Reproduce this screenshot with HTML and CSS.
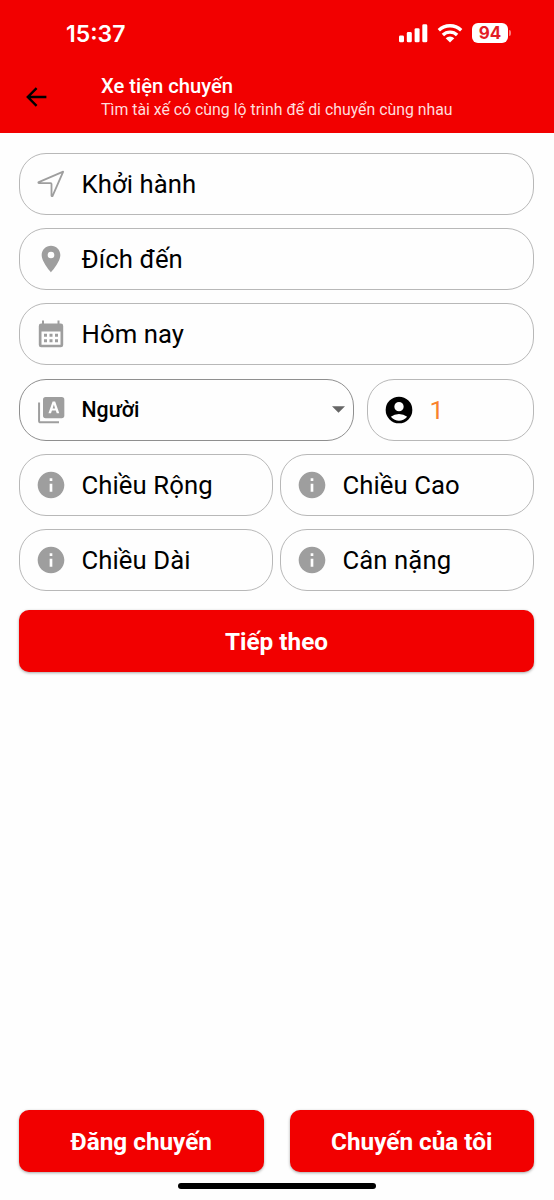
FILE: index.html
```html
<!DOCTYPE html>
<html lang="vi">
<head>
<meta charset="utf-8">
<title>Xe tiện chuyến</title>
<link rel="stylesheet" href="styles.css">
</head>
<body>
<svg class="defs" width="0" height="0" aria-hidden="true">
  <symbol id="info" viewBox="0 0 24 24"><path d="M12 2C6.48 2 2 6.48 2 12s4.48 10 10 10 10-4.48 10-10S17.52 2 12 2zm1 15h-2v-6h2v6zm0-8h-2V7h2v2z"/></symbol>
</svg>
<div class="screen">
  <header class="header">
    <div class="status">
      <span class="time">15:37</span>
      <div class="indicators">
        <svg class="signal" width="29" height="19" viewBox="0 0 29 19"><rect x="0" y="11.5" width="5" height="6.8" rx="1.4"/><rect x="7.8" y="8" width="5" height="10.3" rx="1.4"/><rect x="15.6" y="4.2" width="5" height="14.1" rx="1.4"/><rect x="23.3" y="0.3" width="5" height="18" rx="1.4"/></svg>
        <svg class="wifi" width="26" height="19" viewBox="0 0 26 19"><path class="arc" d="M1.8 6.3A16 16 0 0 1 24.2 6.3M5.900 11A10 10 0 0 1 20.1 11"/><path d="M13 18.500 8.700 14.2A6.200 6.200 0 0 1 17.3 14.2Z"/></svg>
        <div class="battery"><span class="level">94</span><span class="tip"></span></div>
      </div>
    </div>
    <div class="appbar">
      <svg class="back" width="22" height="20" viewBox="0 0 22 20"><path d="M20.4 10H2M10.6 1.2 1.8 10l8.8 8.8"/></svg>
      <div class="titles">
        <h1 class="title">Xe tiện chuyến</h1>
        <p class="subtitle">Tìm tài xế có cùng lộ trình để di chuyển cùng nhau</p>
      </div>
    </div>
  </header>
  <main class="form">
    <div class="field">
      <svg class="icon" viewBox="0 0 32 32"><path class="outline" d="M28.2 3.7 3.8 14.1c-.6.3-.6.9.1 1h11.7c.6 0 .9.3.9.9v11.5c.1.7.8.9 1.2.2Z"/></svg>
      <span class="label">Khởi hành</span>
    </div>
    <div class="field">
      <svg class="icon" viewBox="0 0 24 24"><path d="M12 2C8.13 2 5 5.13 5 9c0 5.25 7 13 7 13s7-7.75 7-13c0-3.87-3.13-7-7-7zm0 9.500a2.500 2.500 0 0 1 0-5 2.500 2.500 0 0 1 0 5z"/></svg>
      <span class="label">Đích đến</span>
    </div>
    <div class="field">
      <svg class="icon" viewBox="0 0 32 32"><path fill-rule="evenodd" d="M7 2.500h2v3h13.500v-3h2v3h1.300a2.400 2.400 0 0 1 2.400 2.400v19a2.400 2.400 0 0 1-2.400 2.400H6.200a2.400 2.400 0 0 1-2.400-2.400v-19a2.400 2.400 0 0 1 2.400-2.400H7ZM6.500 13.500v13.300h19V13.500Z"/><path d="M9 15.700h3v3H9zm5.500 0h3v3h-3zm5.500 0h3v3h-3zM9 21.300h3v3H9zm5.500 0h3v3h-3zm5.500 0h3v3h-3z"/></svg>
      <span class="label">Hôm nay</span>
    </div>
    <div class="row people">
      <div class="field select">
        <svg class="icon" viewBox="0 0 24 24"><path fill-rule="evenodd" d="M8 2.300h12a2 2 0 0 1 2 2v11.800a2 2 0 0 1-2 2H8a2 2 0 0 1-2-2V4.300a2 2 0 0 1 2-2zM10.100 14.400h1.900l.7-2h2.900l.7 2h1.900l-3.100-8.800h-1.900zM13.200 10.900l.95-3.100.95 3.100z"/><path d="M2.300 6.300h1.500v14.200H18V22H4.300a2 2 0 0 1-2-2z"/></svg>
        <span class="label">Người</span>
        <svg class="caret" width="13" height="7" viewBox="0 0 13 7"><path d="M0 .3h13L6.500 6.800z"/></svg>
      </div>
      <div class="field count">
        <svg class="icon" viewBox="0 0 24 24"><path fill-rule="evenodd" d="M12 2a10 10 0 1 0 0 20 10 10 0 0 0 0-20zm0 4a3.500 3.500 0 1 1 0 7 3.500 3.500 0 0 1 0-7zm0 14c-2.030 0-4.430-.82-6.140-2.880a9.950 9.950 0 0 1 12.280 0C16.430 19.180 14.030 20 12 20z"/></svg>
        <span class="label">1</span>
      </div>
    </div>
    <div class="row">
      <div class="field"><svg class="icon"><use href="#info"/></svg><span class="label">Chiều Rộng</span></div>
      <div class="field"><svg class="icon"><use href="#info"/></svg><span class="label">Chiều Cao</span></div>
    </div>
    <div class="row">
      <div class="field"><svg class="icon"><use href="#info"/></svg><span class="label">Chiều Dài</span></div>
      <div class="field"><svg class="icon"><use href="#info"/></svg><span class="label">Cân nặng</span></div>
    </div>
    <button class="button next">Tiếp theo</button>
  </main>
  <footer class="footer">
    <div class="actions">
      <button class="button">Đăng chuyến</button>
      <button class="button">Chuyến của tôi</button>
    </div>
    <div class="home"></div>
  </footer>
</div>
</body>
</html>
```

FILE: styles.css
```css
* { box-sizing: border-box; }
body { margin: 0; background: #fefefe; font-family: Roboto, sans-serif; }
.defs { display: block; }
.screen { width: 554px; height: 1200px; display: flex; flex-direction: column; }
.header { height: 133.400px; background: #f20000; color: #fff; }
.status { height: 66px; padding: 0 43px 0 66px; display: flex; justify-content: space-between; align-items: center; }
.time { font: 600 23px Inter, sans-serif; padding-top: 1px; }
.indicators { display: flex; align-items: center; fill: #fff; }
.signal { margin-right: -1px; }
.wifi { margin: 0 9px 0 10px; }
.arc { fill: none; stroke: #fff; stroke-width: 3.300; }
.battery { display: flex; align-items: center; gap: 1px; }
.level { width: 36px; height: 20px; border-radius: 6px; background: #fff; color: #e31c25; font: 700 17px/20px Inter, sans-serif; text-align: center; }
.tip { width: 2px; height: 6px; border-radius: 0 2px 2px 0; background: #f77; }
.appbar { display: flex; align-items: center; padding: 0 26px; height: 62px; }
.back { fill: none; stroke: #000; stroke-width: 2.400; }
.titles { margin-left: 53px; padding-top: 2px; }
.title { margin: 0; font-size: 20.200px; line-height: 23px; font-weight: 500; }
.subtitle { margin: 0; font-size: 15.850px; line-height: 23px; color: #ffdcdc; white-space: nowrap; }
.form { padding: 19.600px 20px 0 19px; display: flex; flex-direction: column; gap: 13.200px; }
.field { flex: 1 1 auto; min-width: 0; height: 62px; padding: 0 14.500px; display: flex; align-items: center; border: 1px solid #b8b8b8; border-radius: 27px; }
.row { display: grid; grid-template-columns: 1fr 1fr; gap: 7px; }
.people { grid-template-columns: 335px 1fr; gap: 13px; }
.icon { width: 32px; height: 32px; flex: none; fill: #9e9e9e; }
.outline { fill: none; stroke: #9e9e9e; stroke-width: 1.800; stroke-linejoin: round; }
.label { margin-left: 15px; font-size: 25.700px; letter-spacing: .08px; color: #000; white-space: nowrap; }
.select { border-color: #8f8f8f; padding-right: 8px; }
.select .label { flex: 1; font-size: 21.300px; font-weight: 500; letter-spacing: 0; }
.caret { fill: #666; }
.count .icon { fill: #000; }
.count .label { color: #f9812c; }
.button { height: 62px; border: 0; border-radius: 10px; background: #f20000; color: #fff; font: 700 24.300px Roboto, sans-serif; box-shadow: 0 1px 3px rgba(0, 0, 0, .35); }
.next { margin-top: 6px; }
.footer { margin-top: auto; }
.actions { display: grid; grid-template-columns: 1fr 1fr; gap: 26px; padding: 0 20px 0 19px; }
.home { width: 198px; height: 6px; margin: 11px auto 10.600px; border-radius: 3px; background: #000; }
```
